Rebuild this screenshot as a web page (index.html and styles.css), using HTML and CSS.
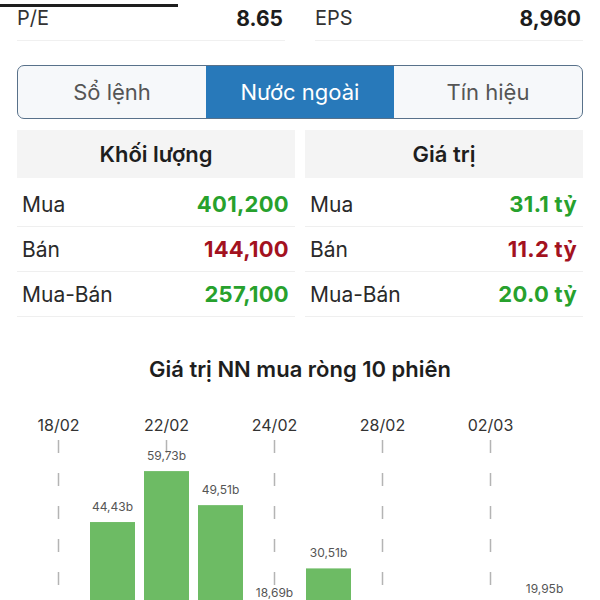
FILE: index.html
```html
<!DOCTYPE html>
<html lang="vi">
<head>
  <meta charset="UTF-8" />
  <meta name="viewport" content="width=device-width, initial-scale=1" />
  <title>Nước ngoài</title>
  <link rel="stylesheet" href="styles.css">
</head>
<body>
  <div class="top-indicator"></div>
  <div class="content">
    <div class="ratio-row">
      <div class="ratio">
        <span class="ratio-name">P/E</span>
        <span class="ratio-value">8.65</span>
      </div>
      <div class="ratio">
        <span class="ratio-name">EPS</span>
        <span class="ratio-value">8,960</span>
      </div>
    </div>

    <div class="tabs">
      <div class="tab">Sổ lệnh</div>
      <div class="tab active">Nước ngoài</div>
      <div class="tab">Tín hiệu</div>
    </div>

    <div class="foreign-grid">
      <div class="foreign-col">
        <div class="col-head">Khối lượng</div>
        <div class="foreign-row"><span>Mua</span><span class="up">401,200</span></div>
        <div class="foreign-row"><span>Bán</span><span class="down">144,100</span></div>
        <div class="foreign-row"><span>Mua-Bán</span><span class="up">257,100</span></div>
      </div>
      <div class="foreign-col">
        <div class="col-head">Giá trị</div>
        <div class="foreign-row"><span>Mua</span><span class="up">31.1 tỷ</span></div>
        <div class="foreign-row"><span>Bán</span><span class="down">11.2 tỷ</span></div>
        <div class="foreign-row"><span>Mua-Bán</span><span class="up">20.0 tỷ</span></div>
      </div>
    </div>

    <h3 class="chart-title">Giá trị NN mua ròng 10 phiên</h3>
  </div>

  <svg class="chart" id="chart" width="600" height="280" viewBox="0 0 600 280"></svg>

  <script>
    // net buy value per session (billion), index = session position
    const sessions = [
      { date: "18/02" },
      { value: 44.43 },
      { date: "22/02", value: 59.73 },
      { value: 49.51 },
      { date: "24/02", value: 18.69 },
      { value: 30.51 },
      { date: "28/02" },
      {},
      { date: "02/03" },
      { value: 19.95 }
    ];

    function renderChart() {
      const svg = document.getElementById("chart");
      const baseY = 270;
      const scale = 3.33;
      let html = "";

      sessions.forEach((s, i) => {
        const cx = 58.5 + i * 54;
        if (s.date) {
          html += `<text class="date-label" x="${cx}" y="31">${s.date}</text>`;
          html += `<line class="grid-line" x1="${cx}" y1="40" x2="${cx}" y2="${baseY}" />`;
        }
      });

      sessions.forEach((s, i) => {
        if (s.value === undefined) return;
        const cx = 58.5 + i * 54;
        const h = s.value * scale;
        const top = baseY - h;
        html += `<rect class="bar" x="${cx - 22.5}" y="${top}" width="45" height="${h}" />`;
        html += `<text class="bar-label" x="${cx}" y="${top - 11}">${s.value.toFixed(2).replace(".", ",")}b</text>`;
      });

      svg.innerHTML = html;
    }

    renderChart();
  </script>
</body>
</html>
```

FILE: styles.css
```css
body {
  margin: 0;
  font-family: Inter, "Noto Sans", sans-serif;
  background-color: #ffffff;
  color: #222;
  overflow: hidden;
}
.top-indicator {
  width: 178px;
  height: 3px;
  margin-top: 4px;
  background-color: #1e1e1e;
}
.content {
  padding: 0 17px;
}
.ratio-row {
  display: flex;
  gap: 30px;
}
.ratio {
  flex: 1;
  display: flex;
  justify-content: space-between;
  align-items: center;
  height: 22px;
  padding-bottom: 11px;
  border-bottom: 1px solid #f0f0f0;
  font-size: 20px;
}
.ratio-name {
  color: #333;
}
.ratio-value {
  font-size: 21px;
  font-weight: 700;
  color: #1c1c1c;
  padding-right: 2px;
}
.tabs {
  display: flex;
  margin-top: 24px;
  height: 52px;
  border: 1px solid #58718a;
  border-radius: 7px;
  overflow: hidden;
  background-color: #f6f8fa;
}
.tab {
  flex: 1;
  display: flex;
  align-items: center;
  justify-content: center;
  font-size: 22px;
  color: #555;
}
.tab.active {
  background-color: #2879ba;
  color: #ffffff;
}
.foreign-grid {
  display: grid;
  grid-template-columns: 1fr 1fr;
  gap: 10px;
  margin-top: 11px;
}
.col-head {
  height: 48px;
  display: flex;
  align-items: center;
  justify-content: center;
  background-color: #f4f4f4;
  font-size: 22px;
  font-weight: 600;
  color: #1e1e1e;
  margin-bottom: 4px;
}
.foreign-row {
  display: flex;
  justify-content: space-between;
  align-items: center;
  height: 44px;
  padding: 0 6px 0 5px;
  border-bottom: 1px solid #efefef;
  font-size: 21px;
  color: #2a2a2a;
}
.foreign-row .up,
.foreign-row .down {
  font-size: 22px;
  font-weight: 700;
  letter-spacing: 0.3px;
}
.foreign-row .up {
  color: #27a12d;
}
.foreign-row .down {
  color: #a3121f;
}
.chart-title {
  margin: 40px 0 0;
  text-align: center;
  font-size: 22px;
  line-height: 24px;
  font-weight: 600;
  color: #1e1e1e;
}
.chart {
  display: block;
  margin-top: 19px;
}
.chart .date-label {
  font-size: 16px;
  fill: #333;
  text-anchor: middle;
}
.chart .grid-line {
  stroke: #b4b4b4;
  stroke-width: 1.5;
  stroke-dasharray: 13 20;
}
.chart .bar {
  fill: #6dbb64;
}
.chart .bar-label {
  font-size: 12px;
  fill: #555;
  text-anchor: middle;
}
```
